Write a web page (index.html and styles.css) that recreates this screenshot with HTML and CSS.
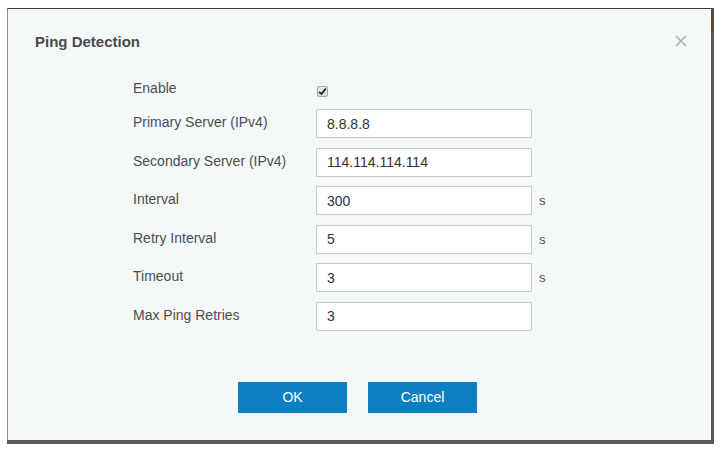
FILE: index.html
```html
<!DOCTYPE html>
<html>
<head>
  <title>Ping Detection</title>
  <meta charset="UTF-8">
  <link rel="stylesheet" href="styles.css">
</head>
<body>
  <div class="backdrop">
    <div class="modal">
      <div class="modal-header">
        <span class="modal-title">Ping Detection</span>
        <span class="close-btn">
          <svg width="12" height="12" viewBox="0 0 12 12">
            <path d="M1 1 L11 11 M11 1 L1 11" stroke="#aeb2b5" stroke-width="1.6" fill="none"/>
          </svg>
        </span>
      </div>

      <div class="form">
        <div class="form-row row-check">
          <label class="form-label">Enable</label>
          <span class="check">
            <svg width="9" height="9" viewBox="0 0 9 9">
              <path d="M1.2 4.8 L3.4 7 L7.8 1.6" stroke="#222" stroke-width="1.7" fill="none"/>
            </svg>
          </span>
        </div>
        <div class="form-row">
          <label class="form-label">Primary Server (IPv4)</label>
          <input class="form-input" type="text" value="8.8.8.8">
        </div>
        <div class="form-row">
          <label class="form-label">Secondary Server (IPv4)</label>
          <input class="form-input" type="text" value="114.114.114.114">
        </div>
        <div class="form-row">
          <label class="form-label">Interval</label>
          <input class="form-input" type="text" value="300">
          <span class="unit">s</span>
        </div>
        <div class="form-row">
          <label class="form-label">Retry Interval</label>
          <input class="form-input" type="text" value="5">
          <span class="unit">s</span>
        </div>
        <div class="form-row">
          <label class="form-label">Timeout</label>
          <input class="form-input" type="text" value="3">
          <span class="unit">s</span>
        </div>
        <div class="form-row">
          <label class="form-label">Max Ping Retries</label>
          <input class="form-input" type="text" value="3">
        </div>
      </div>

      <div class="buttons">
        <button class="btn">OK</button>
        <button class="btn">Cancel</button>
      </div>
    </div>
  </div>
</body>
</html>
```

FILE: styles.css
```css
body {
  margin: 0;
  background: #fff;
  font-family: "Liberation Sans", Arial, sans-serif;
}

/* 遮罩 */
.backdrop {
  margin: 8px 0 0 7px;
  width: 707px;
  height: 436px;
  background: linear-gradient(to bottom, #5b4a3a 24px, #575b5d 24px);
}

/* 对话框 */
.modal {
  box-sizing: border-box;
  width: 704px;
  height: 432px;
  background: #f5f8f9;
  border-top: 1px solid #3e3934;
  border-left: 1px solid #8c8c8c;
}

.modal-header {
  display: flex;
  justify-content: space-between;
  align-items: center;
  padding: 22px 24px 0 27px;
  height: 20px;
}

.modal-title {
  font-size: 15px;
  font-weight: bold;
  color: #4a4a4a;
}

.close-btn {
  display: flex;
}

/* 表单 */
.form {
  margin-top: 29px;
  padding-left: 125px;
}

.form-row {
  display: flex;
  align-items: center;
  height: 29px;
  margin-bottom: 9.6px;
}

.form-row.row-check {
  height: 20px;
  margin-bottom: 9px;
}

.form-label {
  width: 183px;
  font-size: 14px;
  color: #4d4d4d;
  margin-top: -3px;
}

.row-check .form-label {
  margin-top: -4px;
}

.check {
  box-sizing: border-box;
  display: flex;
  align-items: center;
  justify-content: center;
  width: 11px;
  height: 11px;
  margin: 2px 0 0 1px;
  border: 1px solid #a6a6a6;
  border-radius: 2px;
  background: linear-gradient(#e9e9e9, #d6d6d6);
}

.form-input {
  box-sizing: border-box;
  width: 216px;
  height: 29px;
  padding: 0 10px;
  margin: 0;
  border: 1px solid #c6c9cb;
  border-radius: 1px;
  background: #fff;
  font-family: "Liberation Sans", Arial, sans-serif;
  font-size: 14px;
  color: #333;
  outline: none;
}

.unit {
  margin-left: 7px;
  font-size: 13px;
  color: #555;
}

/* 按钮 */
.buttons {
  display: flex;
  justify-content: center;
  gap: 21px;
  margin-top: 51px;
  padding-right: 4px;
}

.btn {
  width: 109px;
  height: 31px;
  border: none;
  border-radius: 0;
  background: #0b7fc2;
  color: #fff;
  font-family: "Liberation Sans", Arial, sans-serif;
  font-size: 14px;
  cursor: pointer;
}
```
